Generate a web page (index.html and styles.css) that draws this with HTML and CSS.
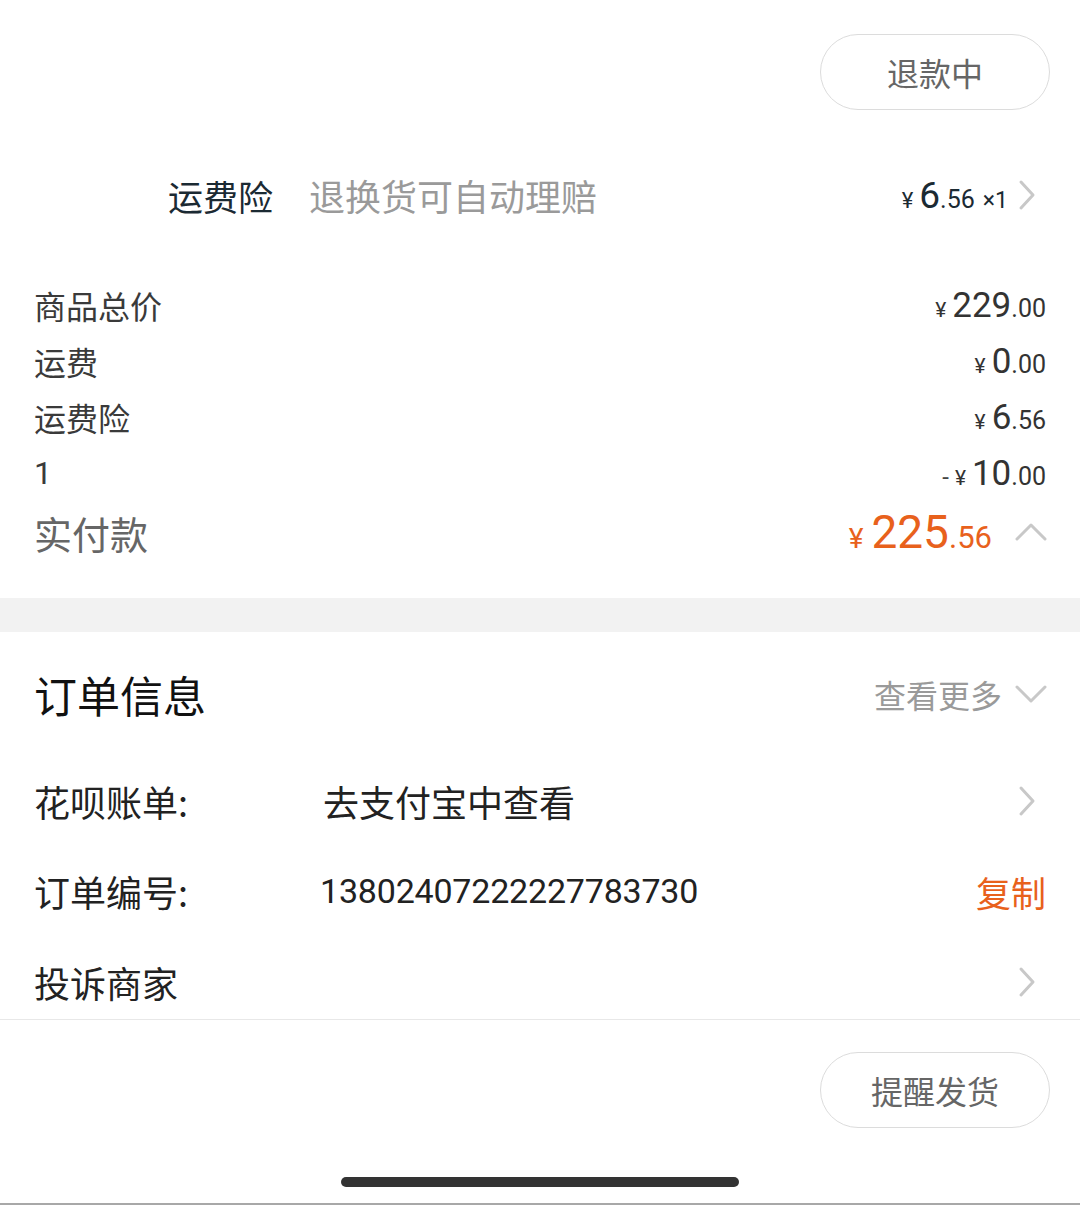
FILE: index.html
```html
<!DOCTYPE html>
<html lang="zh-CN">
<head>
<meta charset="utf-8">
<link rel="stylesheet" href="styles.css">
</head>
<body>
<div class="page">
  <div class="top-bar">
    <button class="pill-btn">退款中</button>
  </div>

  <div class="insurance-row">
    <span class="ins-name">运费险</span>
    <span class="ins-desc">退换货可自动理赔</span>
    <span class="spacer"></span>
    <span class="ins-price"><span class="yen-s">¥</span><span class="int-m">6</span><span class="dec-s">.56</span><span class="qty">×1</span></span>
    <svg class="chev-right" viewBox="0 0 18 32"><path d="M3 3 L15 16 L3 29" fill="none" stroke="#c8c8c8" stroke-width="3" stroke-linecap="round" stroke-linejoin="round"/></svg>
  </div>

  <div class="summary">
    <div class="sum-row"><span class="sum-label">商品总价</span><span class="price"><span class="yen">¥</span><span class="int">229</span><span class="dec">.00</span></span></div>
    <div class="sum-row"><span class="sum-label">运费</span><span class="price"><span class="yen">¥</span><span class="int">0</span><span class="dec">.00</span></span></div>
    <div class="sum-row"><span class="sum-label">运费险</span><span class="price"><span class="yen">¥</span><span class="int">6</span><span class="dec">.56</span></span></div>
    <div class="sum-row"><span class="sum-label num-label">1</span><span class="price"><span class="minus">-</span><span class="yen">¥</span><span class="int">10</span><span class="dec">.00</span></span></div>
    <div class="total-row">
      <span class="total-label">实付款</span>
      <span class="total-price"><span class="t-yen">¥</span><span class="t-int">225</span><span class="t-dec">.56</span></span>
      <svg class="chev-up" viewBox="0 0 34 20"><path d="M3 17 L17 3 L31 17" fill="none" stroke="#c8c8c8" stroke-width="3" stroke-linecap="round" stroke-linejoin="round"/></svg>
    </div>
  </div>

  <div class="band"></div>

  <div class="info">
    <div class="info-head">
      <span class="info-title">订单信息</span>
      <span class="more">查看更多</span>
      <svg class="chev-down" viewBox="0 0 34 22"><path d="M3 4 L17 18 L31 4" fill="none" stroke="#c8c8c8" stroke-width="3" stroke-linecap="round" stroke-linejoin="round"/></svg>
    </div>
    <div class="info-row">
      <span class="info-label">花呗账单:</span>
      <span class="info-value">去支付宝中查看</span>
      <svg class="chev-right" viewBox="0 0 18 32"><path d="M3 3 L15 16 L3 29" fill="none" stroke="#c8c8c8" stroke-width="3" stroke-linecap="round" stroke-linejoin="round"/></svg>
    </div>
    <div class="info-row">
      <span class="info-label">订单编号:</span>
      <span class="info-value order-no">13802407222227783730</span>
      <span class="copy">复制</span>
    </div>
    <div class="info-row last">
      <span class="info-label">投诉商家</span>
      <span class="info-value"></span>
      <svg class="chev-right" viewBox="0 0 18 32"><path d="M3 3 L15 16 L3 29" fill="none" stroke="#c8c8c8" stroke-width="3" stroke-linecap="round" stroke-linejoin="round"/></svg>
    </div>
  </div>

  <div class="footer">
    <div class="footer-actions">
      <button class="pill-btn">提醒发货</button>
    </div>
    <div class="home-indicator"></div>
  </div>
</div>
</body>
</html>
```

FILE: styles.css
```css
* { box-sizing: border-box; }
html, body { margin: 0; padding: 0; background: #fff; }
body {
  font-family: "Noto Sans CJK SC", "Noto Sans", sans-serif;
  color: #333;
}
.page {
  width: 1080px;
  height: 1205px;
  overflow: hidden;
  display: flex;
  flex-direction: column;
  border-bottom: 2px solid #a8a8a8;
}

.top-bar {
  height: 160px;
  padding: 34px 30px 0 0;
  display: flex;
  justify-content: flex-end;
  align-items: flex-start;
}
.pill-btn {
  width: 230px;
  height: 76px;
  border: 1.5px solid #dcdcdc;
  border-radius: 38px;
  background: #fff;
  font-family: "Noto Sans CJK SC", sans-serif;
  font-size: 32px;
  color: #666;
  padding: 0;
  line-height: 1;
}

.insurance-row {
  height: 70px;
  display: flex;
  align-items: center;
  padding: 0 44px 0 168px;
}
.ins-name { font-size: 35px; color: #1b2a33; }
.ins-desc { font-size: 36px; color: #9a9a9a; margin-left: 36px; }
.spacer { flex: 1; }
.ins-price {
  font-family: Roboto, "Noto Sans", sans-serif;
  color: #1b2a33;
  display: flex;
  align-items: baseline;
}
.yen-s { font-size: 22px; margin-right: 6px; }
.int-m { font-size: 37px; }
.dec-s { font-size: 25px; }
.qty { font-size: 23px; margin-left: 8px; }
.chev-right { width: 18px; height: 32px; margin-left: 10px; flex: none; }

.summary {
  padding: 47px 34px 27px 34px;
}
.sum-row {
  height: 56px;
  display: flex;
  align-items: center;
  justify-content: space-between;
}
.sum-label { font-size: 32px; color: #3a3a3a; }
.num-label { font-family: Roboto, sans-serif; font-size: 32px; }
.price {
  font-family: Roboto, "Noto Sans", sans-serif;
  color: #333;
  display: flex;
  align-items: baseline;
}
.minus { font-size: 24px; margin-right: 6px; color: #444; }
.yen { font-size: 21px; margin-right: 6px; }
.int { font-size: 35px; }
.dec { font-size: 25px; }

.total-row {
  height: 70px;
  display: flex;
  align-items: center;
  margin-top: -4px;
}
.total-label { font-size: 38px; color: #666; flex: 1; }
.total-price {
  font-family: Roboto, "Noto Sans", sans-serif;
  color: #e8611c;
  display: flex;
  align-items: baseline;
}
.t-yen { font-size: 28px; margin-right: 8px; }
.t-int { font-size: 46px; }
.t-dec { font-size: 31px; }
.chev-up { width: 34px; height: 20px; margin-left: 22px; flex: none; margin-right: -2px; }

.band { height: 34px; background: #f2f2f2; flex: none; margin-top: 4px; }

.info { padding: 0 34px; border-bottom: 1.5px solid #e8e8e8; }
.info-head {
  height: 124px;
  display: flex;
  align-items: center;
}
.info-title { font-size: 43px; color: #111; font-weight: 400; flex: 1; }
.more { font-size: 32px; color: #9a9a9a; }
.chev-down { width: 34px; height: 22px; margin-left: 12px; margin-right: -2px; }

.info-row {
  height: 90px;
  display: flex;
  align-items: center;
}
.info-row.last { height: 83px; padding-top: 8px; }
.info-label { font-size: 36px; color: #222; width: 289px; flex: none; }
.info-value { font-size: 36px; color: #222; flex: 1; }
.order-no { font-family: Roboto, sans-serif; font-size: 34px; margin-left: -3px; letter-spacing: -0.2px; }
.copy { font-size: 35px; color: #e8611c; }
.info-row .chev-right { margin-right: 10px; }

.footer { flex: 1; display: flex; flex-direction: column; align-items: center; }
.footer-actions {
  align-self: stretch;
  display: flex;
  justify-content: flex-end;
  padding: 32px 30px 0 0;
}
.home-indicator {
  margin-top: 49px;
  width: 398px;
  height: 10px;
  border-radius: 5px;
  background: #333;
}
```
